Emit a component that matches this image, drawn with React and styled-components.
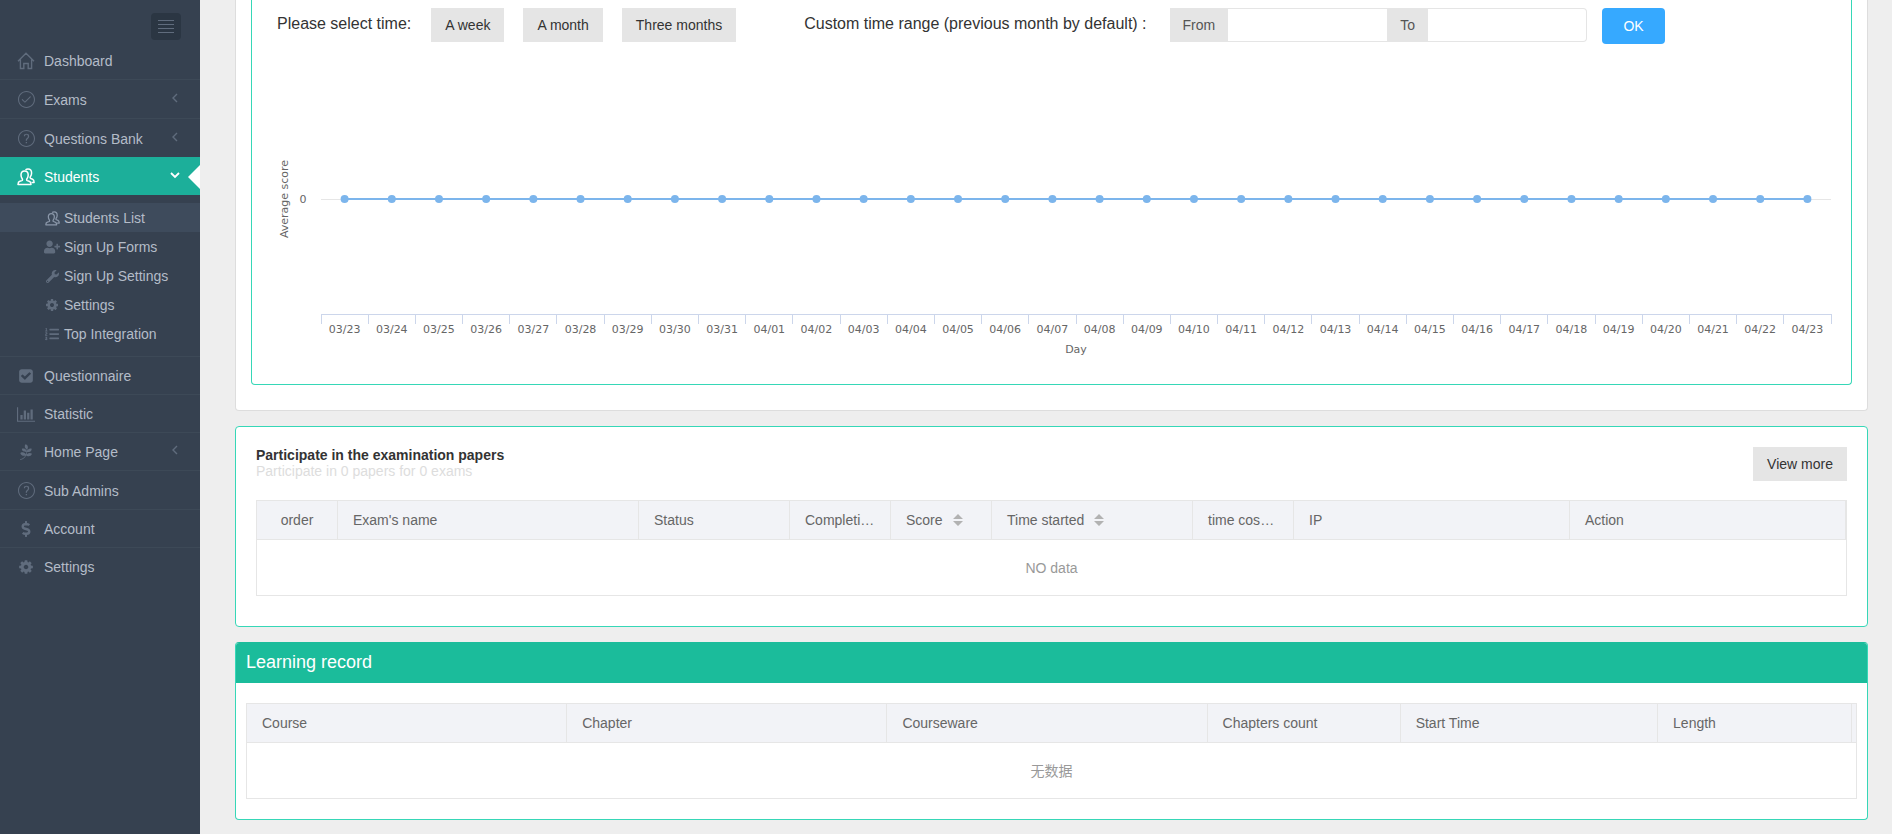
import React from 'react';
import styled, { createGlobalStyle, css } from 'styled-components';
import { SlCheck, SlQuestion } from 'react-icons/sl';
import { FaUserPlus, FaWrench, FaListOl, FaDollarSign, FaPagelines } from 'react-icons/fa';

const GlobalStyle = createGlobalStyle`
  *, *::before, *::after { box-sizing: border-box; }
  body {
    margin: 0;
    background: #eee;
    color: #333;
    font-family: "Liberation Sans", Arial, "Noto Sans CJK SC", sans-serif;
    font-size: 14px;
    line-height: 20px;
  }
  button, input { font: inherit; }
`;

/* ---------- icons ---------- */

const HomeIcon = () => (
  <svg width="18" height="18" viewBox="0 0 18 18" fill="none" stroke="currentColor" strokeWidth="1.4">
    <path d="M1 9.2 9 1.2l8 8M3.4 7.4v9.1h3.4v-5h4.4v5h3.4V7.4" />
  </svg>
);

const PeopleIcon = ({ size = 18 }) => (
  <svg width={size} height={size} viewBox="0 0 18 18" fill="none" stroke="currentColor" strokeWidth="1.5" strokeLinejoin="round">
    <path d="M1 16.500h13c0-2-.5-2.800-1.800-3.200l-2-.7c-.7-.3-.7-1.200-.2-1.900.8-1 1.200-2.200 1.200-3.700 0-2.500-1.500-4-3.600-4S4 4.500 4 7c0 1.500.4 2.700 1.200 3.700.5.700.4 1.600-.3 1.900l-2.100.7C1.500 13.700 1 14.500 1 16.500z" />
    <path d="M8.500 1.900C9.200 1.300 10.100 1 11 1c2.100 0 3.600 1.500 3.600 4 0 1.500-.4 2.700-1.200 3.700-.5.700-.4 1.500.3 1.800l1.900.8c1.100.5 1.500 1.200 1.500 3.200h-2.600" />
  </svg>
);

const BarsIcon = () => (
  <svg width="18" height="15" viewBox="0 0 2048 1664" fill="currentColor">
    <path d="M640 896v512H384V896h256zm384-512v1024H768V384h256zm1024 1152v128H0V0h128v1536h1920zm-640-896v768h-256V640h256zm384-384v1152h-256V256h256z" />
  </svg>
);

const CogIcon = ({ size = 16 }) => (
  <svg width={size} height={size} viewBox="0 0 1792 1792" fill="currentColor">
    <path d="M1152 896q0-106-75-181t-181-75-181 75-75 181 75 181 181 75 181-75 75-181zm512-109v222q0 12-8 23t-20 13l-185 28q-19 54-39 91 35 50 107 138 10 12 10 25t-9 23q-27 37-99 108t-94 71q-12 0-26-9l-138-108q-44 23-91 38-16 136-29 186-7 28-36 28h-222q-14 0-24.500-8.500t-11.500-21.500l-28-184q-49-16-90-37l-141 107q-10 9-25 9-14 0-25-11-126-114-165-168-7-10-7-23 0-12 8-23 15-21 51-66.500t54-70.500q-27-50-41-99l-183-27q-13-2-21-12.500t-8-23.500v-222q0-12 8-23t19-13l186-28q14-46 39-92-40-57-107-138-10-12-10-24 0-10 9-23 26-36 98.500-107.500t94.500-71.500q13 0 26 10l138 107q44-23 91-38 16-136 29-186 7-28 36-28h222q14 0 24.500 8.500t11.500 21.500l28 184q49 16 90 37l142-107q9-9 24-9 13 0 25 10 129 119 165 170 7 8 7 22 0 12-8 23-15 21-51 66.500t-54 70.500q26 50 41 98l183 28q13 2 21 12.500t8 23.500z" />
  </svg>
);

const TickSquareIcon = () => (
  <svg width="16" height="16" viewBox="0 0 1792 1792" fill="currentColor">
    <path d="M813 1299l614-614q19-19 19-45t-19-45l-102-102q-19-19-45-19t-45 19l-467 467-211-211q-19-19-45-19t-45 19l-102 102q-19 19-19 45t19 45l358 358q19 19 45 19t45-19zm851-883v960q0 119-84.500 203.500t-203.500 84.500h-960q-119 0-203.500-84.500t-84.500-203.500v-960q0-119 84.500-203.500t203.500-84.500h960q119 0 203.500 84.500t84.500 203.500z" />
  </svg>
);

const MenuIcon = () => (
  <svg width="16" height="15" viewBox="0 0 16 15" fill="none" stroke="currentColor">
    <path d="M0 1.500h16M0 5.500h16M0 9.500h16M0 13.500h16" />
  </svg>
);

const ArrowLeft = () => (
  <svg width="10" height="10" viewBox="0 0 10 10" fill="none" stroke="currentColor" strokeWidth="1.400">
    <path d="M7 1 3 5l4 4" />
  </svg>
);

const ArrowDown = () => (
  <svg width="10" height="10" viewBox="0 0 10 10" fill="none" stroke="currentColor" strokeWidth="1.800">
    <path d="M1 3l4 4 4-4" />
  </svg>
);

const SortIcon = () => (
  <svg width="10" height="14" viewBox="0 0 10 14" fill="#b2b2b2">
    <path d="M0 6l5-5 5 5zM0 8h10l-5 5z" />
  </svg>
);

/* ---------- sidebar ---------- */

const Page = styled.div`
  display: flex;
  min-height: 100vh;
`;

const Sidebar = styled.nav`
  flex: 0 0 200px;
  background: #364150;
`;

const SidebarTop = styled.div`
  display: flex;
  justify-content: flex-end;
  padding: 13px 19px 1px 0;
`;

const Toggler = styled.button`
  display: flex;
  align-items: center;
  justify-content: center;
  width: 30px;
  height: 27px;
  padding: 0;
  border: 0;
  border-radius: 4px;
  background: #2b3643;
  color: #606c7d;
`;

const MenuList = styled.ul`
  list-style: none;
  margin: 0;
  padding: 0;
`;

const MenuLink = styled.a`
  position: relative;
  display: flex;
  align-items: center;
  gap: 9px;
  height: ${(p) => (p.$tall ? 39 : 38)}px;
  padding: 1px 20px 0 17px;
  border-top: 1px solid ${(p) => (p.$plain ? 'transparent' : '#3d4957')};
  color: #b4bcc8;
  text-decoration: none;
  ${(p) =>
    p.$active &&
    css`
      border-top-color: #1caf9a;
      background: #1caf9a;
      color: #fff;
      &::after {
        content: '';
        position: absolute;
        right: 0;
        top: 7px;
        border: solid transparent;
        border-width: 12px 12px 12px 0;
        border-right-color: #fff;
      }
    `}
`;

const MenuIconBox = styled.span`
  display: flex;
  justify-content: center;
  flex: 0 0 18px;
  color: ${(p) => (p.$active ? '#fff' : '#606c7d')};
`;

const MenuText = styled.span`
  flex: 1;
`;

const Arrow = styled.span`
  display: flex;
  padding-bottom: 4px;
  color: ${(p) => (p.$active ? '#fff' : '#606c7d')};
`;

const SubMenu = styled.ul`
  list-style: none;
  margin: 0;
  padding: 8px 0;
`;

const SubLink = styled.a`
  display: flex;
  align-items: center;
  gap: 4px;
  height: 29px;
  padding: 1px 0 0 44px;
  background: ${(p) => (p.$active ? '#3e4b5c' : 'transparent')};
  color: #b4bcc8;
  text-decoration: none;
`;

const SubIconBox = styled.span`
  display: flex;
  justify-content: center;
  flex: 0 0 16px;
  color: ${(p) => (p.$active ? '#8a97a9' : '#606c7d')};
`;

const MENU = [
  { label: 'Dashboard', icon: <HomeIcon />, plain: true },
  { label: 'Exams', icon: <SlCheck size={17} />, tall: true, more: true },
  { label: 'Questions Bank', icon: <SlQuestion size={17} />, tall: true, more: true },
  {
    label: 'Students',
    icon: <PeopleIcon />,
    active: true,
    children: [
      { label: 'Students List', icon: <PeopleIcon size={15} />, active: true },
      { label: 'Sign Up Forms', icon: <FaUserPlus size={16} /> },
      { label: 'Sign Up Settings', icon: <FaWrench size={13} /> },
      { label: 'Settings', icon: <CogIcon size={14} /> },
      { label: 'Top Integration', icon: <FaListOl size={14} /> },
    ],
  },
  { label: 'Questionnaire', icon: <TickSquareIcon /> },
  { label: 'Statistic', icon: <BarsIcon /> },
  { label: 'Home Page', icon: <FaPagelines size={16} />, more: true },
  { label: 'Sub Admins', icon: <SlQuestion size={17} />, tall: true },
  { label: 'Account', icon: <FaDollarSign size={16} /> },
  { label: 'Settings', icon: <CogIcon /> },
];

function SideMenu() {
  return (
    <Sidebar>
      <SidebarTop>
        <Toggler type="button" aria-label="Toggle menu">
          <MenuIcon />
        </Toggler>
      </SidebarTop>
      <MenuList>
        {MENU.map((item, i) => (
          <li key={i}>
            <MenuLink href="#" $tall={item.tall} $plain={item.plain} $active={item.active}>
              <MenuIconBox $active={item.active}>{item.icon}</MenuIconBox>
              <MenuText>{item.label}</MenuText>
              {(item.more || item.children) && (
                <Arrow $active={item.active}>{item.active ? <ArrowDown /> : <ArrowLeft />}</Arrow>
              )}
            </MenuLink>
            {item.children && (
              <SubMenu>
                {item.children.map((sub) => (
                  <li key={sub.label}>
                    <SubLink href="#" $active={sub.active}>
                      <SubIconBox $active={sub.active}>{sub.icon}</SubIconBox>
                      {sub.label}
                    </SubLink>
                  </li>
                ))}
              </SubMenu>
            )}
          </li>
        ))}
      </MenuList>
    </Sidebar>
  );
}

/* ---------- content ---------- */

const Content = styled.main`
  flex: 1;
  min-width: 0;
  display: flex;
  flex-direction: column;
  gap: 15px;
  padding: 0 24px 14px 35px;
`;

const OuterCard = styled.section`
  padding: 0 15px 25px;
  border: 1px solid #ddd;
  border-top: 0;
  border-radius: 0 0 4px 4px;
  background: #fff;
`;

const ChartPanel = styled.div`
  padding: 8px 20px 0 25px;
  border: 1px solid #36d7b7;
  border-top: 0;
  border-radius: 0 0 4px 4px;
`;

const Toolbar = styled.form`
  display: flex;
  flex-wrap: wrap;
  align-items: flex-start;
`;

const ToolbarText = styled.span`
  font-size: 16px;
  line-height: 32px;
`;

const ButtonGroup = styled.div`
  display: flex;
  gap: 19px;
  margin: 0 68px 0 20px;
`;

const GreyButton = styled.button`
  height: 34px;
  padding: 0 14px;
  border: 0;
  background: #e5e5e5;
  color: #333;
`;

const RangeGroup = styled.div`
  display: flex;
  height: 34px;
  margin: 0 15px 0 23px;
`;

const RangeLabel = styled.label`
  display: flex;
  align-items: center;
  padding: 0 13px;
  background: #e5e5e5;
  color: #555;
`;

const RangeInput = styled.input`
  width: 159px;
  padding: 6px 12px;
  border: 1px solid #e5e5e5;
  border-left: 0;
  border-radius: ${(p) => (p.$last ? '0 4px 4px 0' : '0')};
  border-right-width: ${(p) => (p.$last ? '1px' : '0')};
  background: #fff;
`;

const OkButton = styled.button`
  width: 63px;
  height: 36px;
  border: 0;
  border-radius: 4px;
  background: #36a9ff;
  color: #fff;
`;

const ChartRow = styled.div`
  display: flex;
  height: 340px;
  font-family: "DejaVu Sans", sans-serif;
  font-size: 11px;
`;

const AxisSvg = styled.svg`
  flex: 0 0 44px;
  height: 100%;
`;

const PlotSvg = styled.svg`
  flex: 1;
  min-width: 0;
  height: 100%;
  overflow: visible;
`;

const DAYS = [
  ...Array.from({ length: 9 }, (_, i) => `03/${23 + i}`),
  ...Array.from({ length: 23 }, (_, i) => `04/${String(i + 1).padStart(2, '0')}`),
];

const ZERO_Y = 155;
const AXIS_Y = 270;
const at = (n) => `${(n / DAYS.length) * 100}%`;

function ScoreChart() {
  return (
    <ChartRow>
      <AxisSvg fill="#666" textAnchor="middle">
        <text transform={`translate(11 ${ZERO_Y}) rotate(-90)`}>Average score</text>
        <text x="26" y={ZERO_Y + 4}>0</text>
      </AxisSvg>
      <PlotSvg>
        <line x1="0" x2="100%" y1={ZERO_Y} y2={ZERO_Y} stroke="#e6e6e6" shapeRendering="crispEdges" />
        <line x1={at(0.5)} x2={at(DAYS.length - 0.5)} y1={ZERO_Y} y2={ZERO_Y} stroke="#7cb5ec" strokeWidth="2" />
        <g stroke="#ccd6eb" shapeRendering="crispEdges">
          <line x1="0" x2="100%" y1={AXIS_Y} y2={AXIS_Y} />
          {Array.from({ length: DAYS.length + 1 }, (_, i) => (
            <line key={i} x1={at(i)} x2={at(i)} y1={AXIS_Y} y2={AXIS_Y + 10} />
          ))}
        </g>
        {DAYS.map((day, i) => (
          <circle key={day} cx={at(i + 0.5)} cy={ZERO_Y} r="4" fill="#7cb5ec" />
        ))}
        <g fill="#666" textAnchor="middle">
          {DAYS.map((day, i) => (
            <text key={day} x={at(i + 0.5)} y={AXIS_Y + 19}>{day}</text>
          ))}
          <text x="50%" y={AXIS_Y + 39}>Day</text>
        </g>
      </PlotSvg>
    </ChartRow>
  );
}

const Card = styled.section`
  border: 1px solid #36d7b7;
  border-top-color: ${(p) => (p.$solid ? '#1bbc9b' : '#36d7b7')};
  border-radius: 4px;
  background: #fff;
  overflow: hidden;
`;

const CardBody = styled.div`
  padding: ${(p) => (p.$wide ? '20px 20px 30px' : '20px 10px')};
`;

const PapersHead = styled.header`
  display: flex;
  align-items: flex-start;
  justify-content: space-between;
  margin-bottom: 19px;
`;

const PapersTitle = styled.h2`
  margin: 0;
  font-size: 14px;
  line-height: 16px;
`;

const PapersNote = styled.p`
  margin: 0;
  line-height: 16px;
  color: #ddd;
`;

const GreenHeader = styled.h2`
  margin: 0;
  padding: 6px 10px 8px;
  background: #1bbc9b;
  color: #fff;
  font-size: 18px;
  font-weight: 400;
  line-height: 26px;
`;

const DataTable = styled.table`
  width: 100%;
  table-layout: fixed;
  border: 1px solid #e6e6e6;
  border-spacing: 0;
`;

const HeadCell = styled.th`
  height: 39px;
  padding: 0 15px;
  border-right: ${(p) => (p.$filler ? 0 : 1)}px solid #e6e6e6;
  border-bottom: 1px solid #e6e6e6;
  background: #f2f3f7;
  color: #666;
  font-weight: 400;
  text-align: ${(p) => (p.$center ? 'center' : 'left')};
  white-space: nowrap;
  overflow: hidden;
  text-overflow: ellipsis;
  svg {
    margin-left: 10px;
    vertical-align: -2px;
  }
`;

const EmptyCell = styled.td`
  height: 55px;
  padding: 0;
  color: #999;
  text-align: center;
`;

function Grid({ columns, empty }) {
  return (
    <DataTable>
      <colgroup>
        {columns.map((c, i) => (
          <col key={i} width={c.width} />
        ))}
      </colgroup>
      <thead>
        <tr>
          {columns.map((c, i) => (
            <HeadCell key={i} $center={c.center} $filler={!c.label}>
              {c.label}
              {c.sort && <SortIcon />}
            </HeadCell>
          ))}
        </tr>
      </thead>
      <tbody>
        <tr>
          <EmptyCell colSpan={columns.length}>{empty}</EmptyCell>
        </tr>
      </tbody>
    </DataTable>
  );
}

const PAPER_COLUMNS = [
  { label: 'order', width: 81, center: true },
  { label: "Exam's name", width: 301 },
  { label: 'Status', width: 151 },
  { label: 'Completion', width: 101 },
  { label: 'Score', width: 101, sort: true },
  { label: 'Time started', width: 201, sort: true },
  { label: 'time cost(s)', width: 101 },
  { label: 'IP' },
  { label: 'Action' },
];

const RECORD_COLUMNS = [
  { label: 'Course', width: '19.9%' },
  { label: 'Chapter', width: '19.9%' },
  { label: 'Courseware', width: '19.9%' },
  { label: 'Chapters count', width: '12%' },
  { label: 'Start Time', width: '16%' },
  { label: 'Length' },
  { label: '', width: 4 },
];

export default function App() {
  return (
    <>
      <GlobalStyle />
      <Page>
        <SideMenu />
        <Content>
          <OuterCard>
            <ChartPanel>
              <Toolbar>
                <ToolbarText>Please select time:</ToolbarText>
                <ButtonGroup>
                  <GreyButton type="button">A week</GreyButton>
                  <GreyButton type="button">A month</GreyButton>
                  <GreyButton type="button">Three months</GreyButton>
                </ButtonGroup>
                <ToolbarText>Custom time range (previous month by default) :</ToolbarText>
                <RangeGroup>
                  <RangeLabel htmlFor="range-from">From</RangeLabel>
                  <RangeInput id="range-from" type="text" />
                  <RangeLabel htmlFor="range-to">To</RangeLabel>
                  <RangeInput id="range-to" type="text" $last />
                </RangeGroup>
                <OkButton type="button">OK</OkButton>
              </Toolbar>
              <ScoreChart />
            </ChartPanel>
          </OuterCard>

          <Card>
            <CardBody $wide>
              <PapersHead>
                <div>
                  <PapersTitle>Participate in the examination papers</PapersTitle>
                  <PapersNote>Participate in 0 papers for 0 exams</PapersNote>
                </div>
                <GreyButton type="button">View more</GreyButton>
              </PapersHead>
              <Grid columns={PAPER_COLUMNS} empty="NO data" />
            </CardBody>
          </Card>

          <Card $solid>
            <GreenHeader>Learning record</GreenHeader>
            <CardBody>
              <Grid columns={RECORD_COLUMNS} empty="无数据" />
            </CardBody>
          </Card>
        </Content>
      </Page>
    </>
  );
}
